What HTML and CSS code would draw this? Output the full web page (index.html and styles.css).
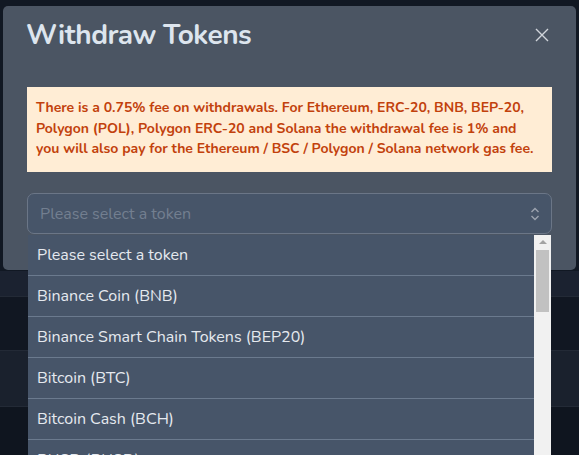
FILE: index.html
```html
<!DOCTYPE html>
<html>
<head>
<meta charset="utf-8">
<link rel="stylesheet" href="styles.css">
</head>
<body>
<div class="page">
  <div class="bg-top"></div>
  <div class="bg-row r1"></div>
  <div class="bg-row r2"></div>
  <div class="bg-row r3"></div>
  <div class="bg-row r4"></div>
</div>
<div class="modal">
  <div class="modal-header">
    <h2 class="modal-title">Withdraw Tokens</h2>
    <svg class="close" width="14" height="14" viewBox="0 0 14 14"><path d="M1 1L13 13M13 1L1 13" stroke="#d1d5db" stroke-width="1.4" fill="none"/></svg>
  </div>
  <div class="alert">There is a 0.75% fee on withdrawals. For Ethereum, ERC-20, BNB, BEP-20,<br>Polygon (POL), Polygon ERC-20 and Solana the withdrawal fee is 1% and<br>you will also pay for the Ethereum / BSC / Polygon / Solana network gas fee.</div>
  <div class="select-wrap">
    <div class="select">
      <span class="placeholder">Please select a token</span>
      <svg class="chev" width="10" height="16" viewBox="0 0 10 16"><path d="M1.5 6L5 2.5L8.5 6M1.5 10L5 13.5L8.5 10" stroke="#9ca3af" stroke-width="1.4" fill="none"/></svg>
    </div>
    <div class="listbox">
      <ul class="options">
        <li>Please select a token</li>
        <li>Binance Coin (BNB)</li>
        <li>Binance Smart Chain Tokens (BEP20)</li>
        <li>Bitcoin (BTC)</li>
        <li>Bitcoin Cash (BCH)</li>
        <li>BUSD (BUSD)</li>
      </ul>
      <div class="scrollbar">
        <div class="arrow"></div>
        <div class="thumb"></div>
      </div>
    </div>
  </div>
</div>
</body>
</html>
```
FILE: styles.css
```css
html, body {
  margin: 0;
  padding: 0;
  width: 579px;
  height: 455px;
  overflow: hidden;
  background: #0f151f;
  font-family: "Nunito", "Lato", "Open Sans", sans-serif;
}
.page {
  display: flex;
  flex-direction: column;
}
.bg-top { height: 271px; background: #111823; }
.bg-row { border-bottom: 1px solid #232a36; }
.r1 { height: 25px; background: #1b2230; }
.r2 { height: 53px; background: #111722; }
.r3 { height: 55px; background: #1a212d; }
.r4 { height: 60px; background: #0f151f; border-bottom: none; }

.modal {
  position: absolute;
  top: 6px;
  left: 3px;
  width: 573px;
  height: 264px;
  background: #4b5563;
  border-radius: 5px;
  box-sizing: border-box;
  padding: 0 24px;
}
.modal-header {
  display: flex;
  align-items: center;
  justify-content: space-between;
  height: 58px;
}
.modal-title {
  margin: 0 0 0 -1px;
  font-size: 28px;
  font-weight: 700;
  color: #dde5ee;
  letter-spacing: -0.5px;
}
.close { margin-right: 3px; }
.alert {
  margin-top: 23px;
  background: #ffedd5;
  color: #c2410c;
  font-weight: 700;
  font-size: 14px;
  line-height: 20.5px;
  padding: 11px 4px 12px 9px;
  white-space: nowrap;
}
.select-wrap {
  margin-top: 21px;
  position: relative;
}
.select {
  height: 41px;
  box-sizing: border-box;
  border: 1px solid #6b7687;
  border-radius: 7px;
  background: #475569;
  display: flex;
  align-items: center;
  justify-content: space-between;
  padding: 1px 11px 0 12px;
}
.placeholder {
  color: #737f90;
  font-size: 16px;
}
.listbox {
  position: absolute;
  top: 42px;
  left: 1px;
  width: 523px;
  height: 240px;
  display: flex;
  background: #475569;
}
.options {
  list-style: none;
  margin: 0;
  padding: 0;
  flex: 1;
}
.options li {
  height: 40px;
  line-height: 40px;
  border-bottom: 1px solid #6b7a8e;
  color: #e5e9ef;
  font-size: 16px;
  padding-left: 9px;
}
.scrollbar {
  width: 17px;
  background: #f1f1f1;
  display: flex;
  flex-direction: column;
  align-items: center;
}
.arrow {
  margin-top: 5px;
  width: 0;
  height: 0;
  border-left: 4px solid transparent;
  border-right: 4px solid transparent;
  border-bottom: 4px solid #a3a3a3;
}
.thumb {
  margin-top: 6px;
  width: 13px;
  height: 62px;
  background: #c1c1c1;
}
```
